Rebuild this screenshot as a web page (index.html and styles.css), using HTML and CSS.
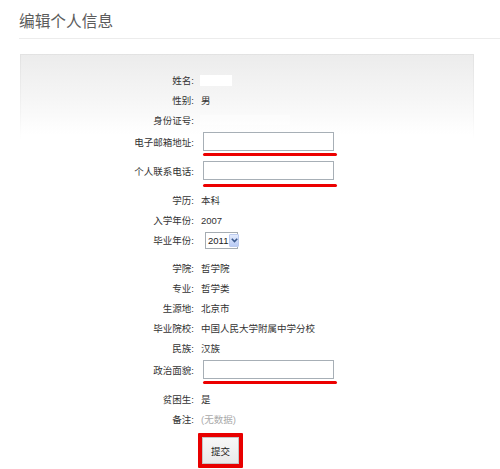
FILE: index.html
```html
<!DOCTYPE html>
<html lang="zh-CN">
<head>
<meta charset="utf-8">
<title>编辑个人信息</title>
<link rel="stylesheet" href="styles.css">
</head>
<body>
<div class="page">
  <h1 class="title">编辑个人信息</h1>
  <div class="panel">
    <div class="row"><span class="label">姓名:</span><span class="value"><span class="masked masked-name"></span></span></div>
    <div class="row"><span class="label">性别:</span><span class="value">男</span></div>
    <div class="row"><span class="label">身份证号:</span><span class="value"><span class="masked masked-id"></span></span></div>
    <div class="row field-row"><span class="label">电子邮箱地址:</span><span class="value"><input class="text-input" type="text"></span></div>
    <div class="mark"></div>
    <div class="row field-row after-mark"><span class="label">个人联系电话:</span><span class="value"><input class="text-input" type="text"></span></div>
    <div class="mark mark-loose"></div>
    <div class="row section-start"><span class="label">学历:</span><span class="value">本科</span></div>
    <div class="row"><span class="label">入学年份:</span><span class="value">2007</span></div>
    <div class="row"><span class="label">毕业年份:</span><span class="value"><span class="select"><span class="select-text">2011</span><span class="select-btn"><svg width="7" height="5" viewBox="0 0 7 5"><path d="M0.8 0.8 L3.5 3.6 L6.2 0.8" fill="none" stroke="#3b5a8e" stroke-width="1.6"/></svg></span></span></span></div>
    <div class="row group-start"><span class="label">学院:</span><span class="value">哲学院</span></div>
    <div class="row"><span class="label">专业:</span><span class="value">哲学类</span></div>
    <div class="row"><span class="label">生源地:</span><span class="value">北京市</span></div>
    <div class="row"><span class="label">毕业院校:</span><span class="value">中国人民大学附属中学分校</span></div>
    <div class="row"><span class="label">民族:</span><span class="value">汉族</span></div>
    <div class="row field-row"><span class="label">政治面貌:</span><span class="value"><input class="text-input" type="text"></span></div>
    <div class="mark"></div>
    <div class="row after-last-mark"><span class="label">贫困生:</span><span class="value">是</span></div>
    <div class="row"><span class="label">备注:</span><span class="value empty">(无数据)</span></div>
    <div class="submit-row"><span class="submit-frame"><button class="submit" type="button">提交</button></span></div>
  </div>
</div>
</body>
</html>
```

FILE: styles.css
```css
html, body {
  margin: 0;
  padding: 0;
  background: #fff;
}

body {
  font-family: "Liberation Sans", "Noto Sans CJK SC", sans-serif;
  font-size: 9.5px;
  color: #333;
  overflow: hidden;
}

.page {
  padding-left: 19px;
}

.title {
  margin: 0;
  padding: 11px 0 7px;
  font-family: "Noto Sans CJK SC", sans-serif;
  font-size: 15.7px;
  line-height: 20px;
  font-weight: normal;
  color: #5c5c5c;
  border-bottom: 1px solid #ececec;
}

.panel {
  margin: 15px 0 0 1px;
  width: 452px;
  padding-top: 15px;
  border: 1px solid transparent;
  border-image: linear-gradient(#e2e2e2, #f4f4f4 60px, #fff 85px) 1;
  background: linear-gradient(#ececec, #f6f6f6 45px, #fff 80px);
  height: 420px;
}

.row {
  display: flex;
  align-items: center;
  height: 20px;
}

.label {
  flex: none;
  width: 173px;
  text-align: right;
}

.value {
  margin-left: 7px;
  display: flex;
  align-items: center;
}

.masked {
  display: block;
  background: #fff;
  margin-left: -1px;
}

.masked-name {
  width: 32px;
  height: 11px;
}

.masked-id {
  width: 90px;
  height: 10px;
  opacity: 0.35;
}

.field-row {
  height: 21px;
  margin-top: 1px;
}

.text-input {
  box-sizing: border-box;
  margin: 0 0 0 2px;
  width: 131px;
  height: 19px;
  border: 1px solid #a7afb6;
  background: #fff;
  padding: 0;
  outline: none;
}

.mark {
  margin: 1px 0 0 182px;
  width: 134px;
  height: 3px;
  border-radius: 2px;
  background: #ec0000;
}

.mark-loose {
  margin-top: 3px;
}

.after-mark {
  margin-top: 4px;
}

.section-start {
  margin-top: 3px;
}

.group-start {
  margin-top: 8px;
}

.after-last-mark {
  margin-top: 5px;
}

.select {
  display: inline-flex;
  align-items: stretch;
  box-sizing: border-box;
  margin-left: 4px;
  width: 33px;
  height: 17px;
  border: 1px solid #a5acb2;
  background: #fff;
}

.select-text {
  flex: 1;
  padding-left: 2px;
  line-height: 15px;
  color: #222;
}

.select-btn {
  flex: none;
  box-sizing: border-box;
  width: 10px;
  margin: 1px;
  display: flex;
  align-items: center;
  justify-content: center;
  background: linear-gradient(#e3ebfd, #b9cbf5);
  border: 1px solid #bccbef;
  border-radius: 1px;
}

.empty {
  color: #aaa;
}

.submit-row {
  display: flex;
  margin: 4px 0 0 177px;
}

.submit-frame {
  box-sizing: border-box;
  display: flex;
  width: 45px;
  height: 35px;
  border: 4px solid #e80000;
  border-radius: 1px;
}

.submit {
  flex: 1;
  margin: 0;
  padding: 0;
  border: 1px solid #c4c4c4;
  background: linear-gradient(#f7f7f7, #e9e9e9);
  font-family: "Noto Sans CJK SC", sans-serif;
  font-size: 9.5px;
  color: #222;
}
```
